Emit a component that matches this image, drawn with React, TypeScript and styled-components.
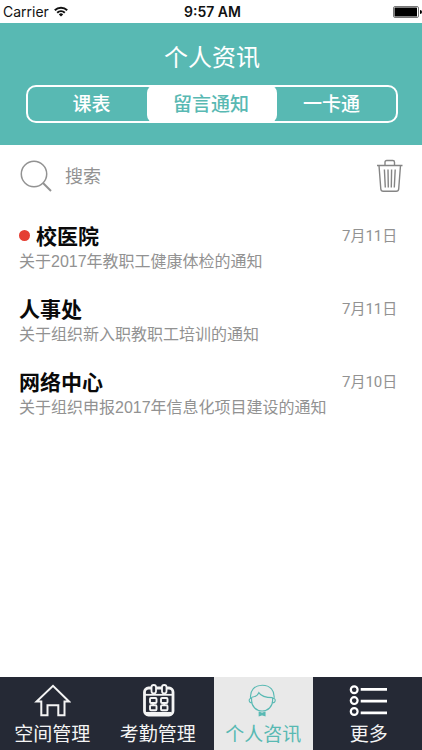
import React, { useState } from "react";
import styled, { createGlobalStyle } from "styled-components";

const teal = "#58b9b3";
const navy = "#252935";
const grey = "#929292";

const GlobalStyle = createGlobalStyle`
  * { box-sizing: border-box; }
  body {
    margin: 0;
    background: #fff;
    font-family: "Noto Sans CJK SC", sans-serif;
  }
  button, input {
    margin: 0;
    padding: 0;
    border: 0;
    background: none;
    font: inherit;
    color: inherit;
  }
  button { cursor: pointer; }
  svg { display: block; }
`;

const Screen = styled.div`
  display: flex;
  flex-direction: column;
  min-height: 100vh;
`;

const StatusBar = styled.div`
  display: grid;
  grid-template-columns: 1fr auto 1fr;
  align-items: center;
  height: 23px;
  padding-left: 3px;
  font-family: Inter, sans-serif;
  font-size: 14px;
  line-height: 23px;
  color: #111;
`;

const Carrier = styled.div`
  display: flex;
  align-items: center;
  gap: 5px;
`;

const Clock = styled.time`
  font-weight: 600;
`;

const Battery = styled.div`
  justify-self: end;
`;

const Header = styled.header`
  padding: 15px 24px 22px 26px;
  background: ${teal};
  color: #fff;
`;

const Title = styled.h1`
  margin: 0 0 11px;
  font-size: 24px;
  font-weight: 400;
  line-height: 36px;
  text-align: center;
`;

const Segments = styled.div`
  display: grid;
  grid-template-columns: 119fr 130fr 119fr;
  height: 38px;
  border: 2px solid #fff;
  border-radius: 10px;
`;

const Segment = styled.button<{ $active: boolean }>`
  margin: -2px 0;
  padding: 0 2px 2px 0;
  border-radius: 8px;
  background: ${(p) => (p.$active ? "#fff" : "transparent")};
  color: ${(p) => (p.$active ? teal : "#fff")};
  font-size: 19px;
  font-weight: 500;
  line-height: 34px;
  &:first-child { padding-left: 10px; }
  &:last-child { padding-right: 10px; }
`;

const SearchRow = styled.div`
  display: flex;
  align-items: center;
  height: 62px;
  padding: 0 18px 0 19px;
  color: ${grey};
`;

const SearchLabel = styled.label`
  display: flex;
  flex: 1;
  align-items: center;
  gap: 12px;
  min-width: 0;
`;

const SearchInput = styled.input`
  flex: 1;
  min-width: 0;
  padding-bottom: 2px;
  font-size: 18px;
  line-height: 28px;
  outline: none;
  &::placeholder { color: ${grey}; opacity: 1; }
`;

const List = styled.ul`
  flex: 1;
  display: flex;
  flex-direction: column;
  gap: 21px;
  margin: 0;
  padding: 15px 19px 20px;
  list-style: none;
`;

const Row = styled.li`
  display: grid;
  grid-template-columns: 1fr 61px;
  align-items: start;
`;

const Sender = styled.h2`
  display: flex;
  align-items: center;
  gap: 6px;
  margin: 0;
  font-size: 21px;
  font-weight: 700;
  line-height: 26px;
  color: #0a0a0a;
`;

const UnreadDot = styled.span`
  width: 11px;
  height: 11px;
  border-radius: 50%;
  background: #e53e32;
`;

const DateText = styled.time`
  font-family: Roboto, "Noto Sans CJK SC", sans-serif;
  font-size: 15px;
  line-height: 28px;
  white-space: nowrap;
  color: ${grey};
`;

const Summary = styled.p`
  grid-column: 1 / -1;
  margin: 0;
  font-family: "Liberation Sans", "Noto Sans CJK SC", sans-serif;
  font-size: 16px;
  font-weight: 400;
  line-height: 24px;
  color: ${grey};
`;

const TabBar = styled.nav`
  display: grid;
  grid-template-columns: repeat(4, 1fr);
  height: 73px;
  background: ${navy};
`;

const Tab = styled.button<{ $active: boolean }>`
  display: flex;
  flex-direction: column;
  align-items: center;
  gap: 1px;
  margin: 0 4px 0 3px;
  padding-top: 6px;
  background: ${(p) => (p.$active ? "#e9e9e9" : "transparent")};
  color: ${(p) => (p.$active ? teal : "#f4f4f4")};
  font-size: 19px;
  line-height: 28px;
  white-space: nowrap;
`;

const WifiIcon = () => (
  <svg width="14" height="11" viewBox="0 0 14 11" fill="none" stroke="#111" strokeWidth="2">
    <path d="M.8 4.2a9 9 0 0 1 12.4 0M3.2 6.8a5.5 5.5 0 0 1 7.6 0" />
    <path d="M7 10.6 4.8 8.4a3.2 3.2 0 0 1 4.4 0Z" fill="#111" stroke="none" />
  </svg>
);

const BatteryIcon = () => (
  <svg width="29" height="12" viewBox="0 0 29 12">
    <rect x=".5" y=".5" width="25" height="11" rx="1.5" fill="#fff" stroke="#777" />
    <rect x="1.5" y="1.5" width="22.5" height="9" rx=".5" fill="#000" />
    <path d="M27 4a2 2 0 0 1 0 4Z" fill="#000" />
  </svg>
);

const SearchIcon = () => (
  <svg width="34" height="34" viewBox="0 0 34 34" fill="none" stroke={grey} strokeWidth="1.5">
    <circle cx="15" cy="15" r="12.7" />
    <path d="m24 24 8 8" strokeWidth="2" />
  </svg>
);

const TrashIcon = () => (
  <svg width="28" height="34" viewBox="0 0 28 34" fill="none" stroke="#858585" strokeWidth="1.4">
    <path d="M1 6.5h25.5M9 6.5V3.2Q9 1.5 10.7 1.5h6.1Q18.5 1.5 18.5 3.2v3.3" />
    <path d="M3 6.5 4.8 30q.2 2.3 2.5 2.3h12.9q2.3 0 2.5-2.3L24.5 6.5" />
    <path d="m8.4 10.5.9 18M12 10.5l.3 18M15.6 10.5l-.3 18M19.2 10.5l-.9 18" />
  </svg>
);

const HomeIcon = () => (
  <svg width="38" height="35" viewBox="0 0 38 35" fill="none" stroke="#f4f4f4" strokeWidth="2">
    <path d="M8.3 18.5H3.6L20 2.8l16 15.7h-4.5V32.3h-6.2V22.2h-10.8v10.1H8.3Z" />
  </svg>
);

const CalendarIcon = () => (
  <svg width="34" height="35" viewBox="0 0 34 35" fill="none" stroke="#f4f4f4">
    <rect x="3.5" y="5" width="28.5" height="27" rx="4" strokeWidth="2.8" />
    <path d="M3.5 11.8h28" strokeWidth="1.8" />
    <g fill={navy} strokeWidth="1.8">
      <rect x="10.5" y="2" width="4.5" height="8.5" rx="2.2" />
      <rect x="21" y="2" width="4.5" height="8.5" rx="2.2" />
    </g>
    <g strokeWidth="1.9">
      <rect x="9" y="15" width="6.5" height="5" rx="1" />
      <rect x="20" y="15" width="6.5" height="5" rx="1" />
      <rect x="9" y="22.2" width="6.5" height="5" rx="1" />
      <rect x="20" y="22.2" width="6.5" height="5" rx="1" />
      <path d="M12.2 20v2.2M23.2 20v2.2" />
      <path d="M5 30.2h25.5" strokeWidth="2.5" />
    </g>
  </svg>
);

const PersonIcon = () => (
  <svg width="30" height="35" viewBox="0 0 30 35" fill="none" stroke={teal} strokeWidth="1.1">
    <path d="M2.6 15.6C1.6 7.5 6.5 2.3 14.3 2.3S27 7.5 26 15.6" />
    <path d="M3.6 14.2C7 14 9.6 12.6 10.8 9.6c2.2 3.6 6 5 13.8 5" />
    <path d="M3.6 14.2v3.3C3.6 23.5 8.3 28 14.1 28s10.5-4.5 10.5-10.5v-2.9" />
    <path d="M3.6 15.6c-1.6-.4-2.5.5-2.4 1.9.1 1.5 1.2 2.4 2.7 2.2M24.8 15.6c1.6-.4 2.5.5 2.4 1.9-.1 1.5-1.2 2.4-2.7 2.2" />
    <path d="m11.2 29.3 2.9 1 2.9-1v3.4l-2.9-1-2.9 1Z" fill={teal} />
  </svg>
);

const MoreIcon = () => (
  <svg width="40" height="35" viewBox="0 0 40 35" fill="none" stroke="#fff" strokeWidth="2.2">
    <circle cx="5.2" cy="6.7" r="3.4" />
    <circle cx="5.2" cy="17.6" r="3.4" />
    <circle cx="5.2" cy="28.5" r="3.4" />
    <path d="M11.7 6.3H38M11.7 18.2H38M11.7 29.8H38" strokeWidth="2.8" />
  </svg>
);

const segments = ["课表", "留言通知", "一卡通"];

const notices = [
  { sender: "校医院", date: "7月11日", summary: "关于2017年教职工健康体检的通知", unread: true },
  { sender: "人事处", date: "7月11日", summary: "关于组织新入职教职工培训的通知", unread: false },
  { sender: "网络中心", date: "7月10日", summary: "关于组织申报2017年信息化项目建设的通知", unread: false },
];

const tabs = [
  { label: "空间管理", Icon: HomeIcon },
  { label: "考勤管理", Icon: CalendarIcon },
  { label: "个人咨讯", Icon: PersonIcon },
  { label: "更多", Icon: MoreIcon },
];

export default function App() {
  const [segment, setSegment] = useState(1);
  return (
    <>
      <GlobalStyle />
      <Screen>
        <StatusBar>
          <Carrier>
            Carrier
            <WifiIcon />
          </Carrier>
          <Clock>9:57 AM</Clock>
          <Battery>
            <BatteryIcon />
          </Battery>
        </StatusBar>
        <Header>
          <Title>个人资讯</Title>
          <Segments>
            {segments.map((label, i) => (
              <Segment
                key={label}
                type="button"
                $active={i === segment}
                aria-pressed={i === segment}
                onClick={() => setSegment(i)}
              >
                {label}
              </Segment>
            ))}
          </Segments>
        </Header>
        <SearchRow>
          <SearchLabel>
            <SearchIcon />
            <SearchInput type="text" placeholder="搜索" aria-label="搜索" />
          </SearchLabel>
          <button type="button" aria-label="删除">
            <TrashIcon />
          </button>
        </SearchRow>
        <List>
          {notices.map((n) => (
            <Row key={n.sender}>
              <Sender>
                {n.unread && <UnreadDot />}
                {n.sender}
              </Sender>
              <DateText>{n.date}</DateText>
              <Summary>{n.summary}</Summary>
            </Row>
          ))}
        </List>
        <TabBar>
          {tabs.map(({ label, Icon }, i) => (
            <Tab key={label} type="button" $active={i === 2} aria-current={i === 2 ? "page" : undefined}>
              <Icon />
              {label}
            </Tab>
          ))}
        </TabBar>
      </Screen>
    </>
  );
}
